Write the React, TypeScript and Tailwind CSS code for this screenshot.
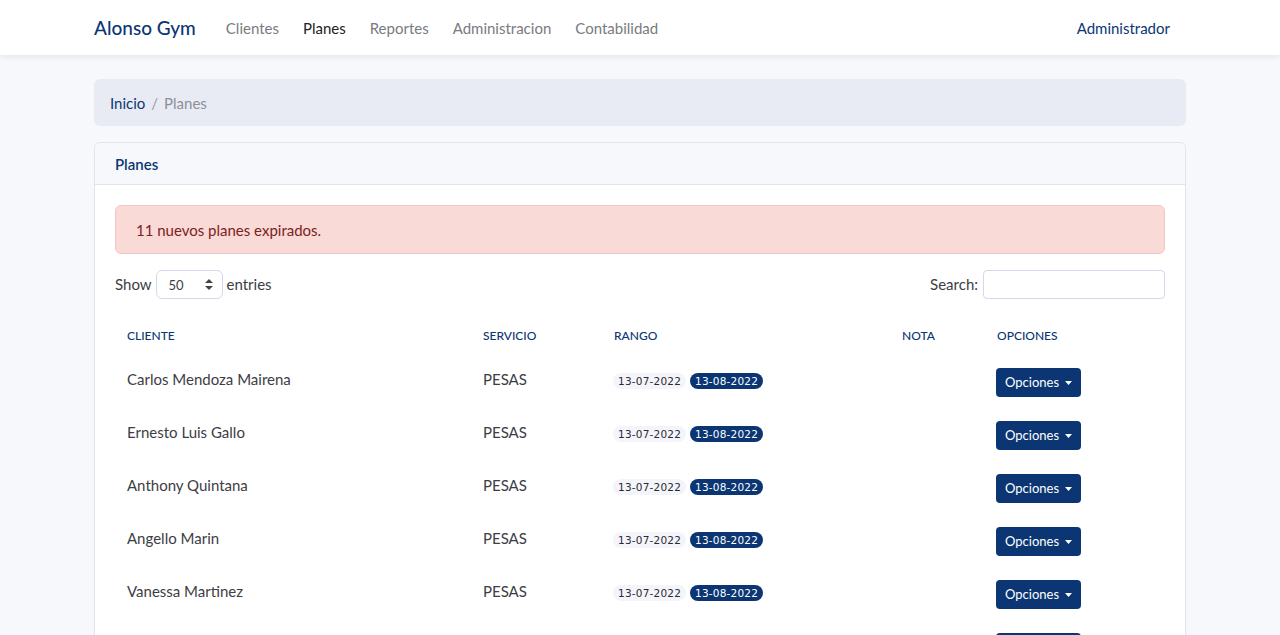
const rows = [
  'Carlos Mendoza Mairena',
  'Ernesto Luis Gallo',
  'Anthony Quintana',
  'Angello Marin',
  'Vanessa Martinez',
  'Luis Rojas',
]

function OpcionesButton() {
  return (
    <button className="flex h-[29px] items-center gap-[6px] rounded-[4px] bg-[#0b3673] pl-[9px] pr-[9px] text-[13px] text-white">
      Opciones
      <svg width="7" height="4" viewBox="0 0 7 4" fill="currentColor">
        <path d="M0 0h7L3.5 4z" />
      </svg>
    </button>
  )
}

export default function App() {
  return (
    <div className="min-h-screen bg-[#f7f8fc] font-['Lato','Noto_Sans',sans-serif] text-[15px] text-[#3d3d45]">
      <nav className="h-[55px] bg-white shadow-[0_2px_6px_rgba(0,0,0,0.08)]">
        <div className="mx-auto flex h-full w-[1092px] items-center pt-[1px]">
          <span className="mr-[18px] text-[19px] font-medium text-[#0b3673]">Alonso Gym</span>
          <ul className="flex items-center text-[15px]">
            <li className="px-[12px] text-[#7a7a82]">Clientes</li>
            <li className="px-[12px] text-[#222]">Planes</li>
            <li className="px-[12px] text-[#7a7a82]">Reportes</li>
            <li className="px-[12px] text-[#7a7a82]">Administracion</li>
            <li className="px-[12px] text-[#7a7a82]">Contabilidad</li>
          </ul>
          <span className="ml-auto pr-[16px] text-[#0b3673]">Administrador</span>
        </div>
      </nav>

      <main className="mx-auto w-[1092px] pt-[24px]">
        <div className="flex h-[47px] items-center rounded-[6px] bg-[#e8ebf3] px-[16px] pt-[1px]">
          <span className="text-[#0b3673]">Inicio</span>
          <span className="px-[6px] text-[#9a9ba3]">/</span>
          <span className="text-[#8e8f97]">Planes</span>
        </div>

        <div className="mt-[16px] rounded-[6px] border border-[#e2e3ee] bg-white">
          <div className="flex h-[42px] items-center rounded-t-[6px] border-b border-[#e2e3ee] bg-[#f7f8fc] px-[20px] pt-[1px] font-semibold text-[#0b3673]">
            Planes
          </div>
          <div className="p-[20px]">
            <div className="flex h-[49px] items-center rounded-[6px] border border-[#f4c6c3] bg-[#f9dad7] px-[20px] pt-[1px] text-[#7b2222]">
              11 nuevos planes expirados.
            </div>

            <div className="mt-[16px] flex items-center justify-between">
              <div className="flex items-center gap-[4px]">
                <span>Show</span>
                <div className="flex h-[29px] w-[67px] items-center justify-between rounded-[6px] border border-[#d8d6ea] pl-[12px] pr-[9px] text-[13px]">
                  <span className="pt-[2px]">50</span>
                  <svg width="8" height="11" viewBox="0 0 8 11" fill="#444">
                    <path d="M4 0L8 4H0zM4 11L0 7h8z" />
                  </svg>
                </div>
                <span>entries</span>
              </div>
              <div className="flex items-center gap-[5px]">
                <span>Search:</span>
                <div className="h-[29px] w-[182px] rounded-[4px] border border-[#d8d6ea]" />
              </div>
            </div>

            <table className="mt-[15px] w-full table-fixed border-collapse">
              <colgroup>
                <col className="w-[356px]" />
                <col className="w-[131px]" />
                <col className="w-[288px]" />
                <col className="w-[95px]" />
                <col />
              </colgroup>
              <thead>
                <tr className="h-[44px] text-left text-[12px] font-medium uppercase text-[#0b3673]">
                  <th className="px-[12px] font-medium">Cliente</th>
                  <th className="px-[12px] font-medium">Servicio</th>
                  <th className="px-[12px] font-medium">Rango</th>
                  <th className="px-[12px] font-medium">Nota</th>
                  <th className="px-[12px] font-medium">Opciones</th>
                </tr>
              </thead>
              <tbody>
                {rows.map((name) => (
                  <tr key={name} className="h-[53px] align-top">
                    <td className="px-[12px] pt-[10px]">{name}</td>
                    <td className="px-[12px] pt-[10px]">PESAS</td>
                    <td className="px-[11px] pt-[15px]">
                      <div className="flex gap-[4px] font-['DejaVu_Sans',sans-serif] text-[10.5px] tracking-[0.2px]">
                        <span className="rounded-full bg-[#f4f5fb] px-[5px] leading-[16px] text-[#2a2a30]">13-07-2022</span>
                        <span className="rounded-full bg-[#0b3673] px-[5px] leading-[16px] text-white">13-08-2022</span>
                      </div>
                    </td>
                    <td className="px-[12px]" />
                    <td className="px-[11px] pt-[10px]">
                      <OpcionesButton />
                    </td>
                  </tr>
                ))}
              </tbody>
            </table>
          </div>
        </div>
      </main>
    </div>
  )
}
